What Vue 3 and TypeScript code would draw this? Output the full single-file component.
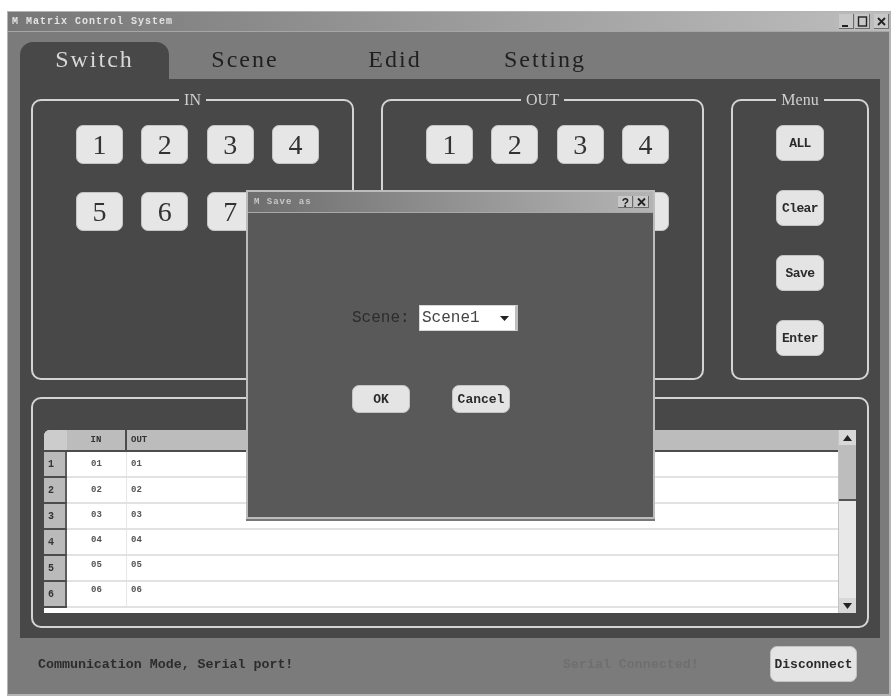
<script setup lang="ts">
import { ref } from 'vue'

const tabs = ['Switch', 'Scene', 'Edid', 'Setting']
const activeTab = ref('Switch')

const ports = [1, 2, 3, 4, 5, 6, 7, 8]
const menuItems = ['ALL', 'Clear', 'Save', 'Enter']

const routes = [
  { in: '01', out: '01' },
  { in: '02', out: '02' },
  { in: '03', out: '03' },
  { in: '04', out: '04' },
  { in: '05', out: '05' },
  { in: '06', out: '06' }
]

const scene = ref('Scene1')
</script>

<template>
  <div class="window">
    <header class="titlebar">
      <span class="title-text">M Matrix Control System</span>
      <div class="win-controls">
        <span class="win-btn"><svg width="15" height="15" viewBox="0 0 15 15"><rect x="3" y="11" width="6" height="2" fill="#222" /></svg></span>
        <span class="win-btn"><svg width="15" height="15" viewBox="0 0 15 15"><rect x="3.5" y="3" width="8" height="9" fill="none" stroke="#222" stroke-width="1.4" /></svg></span>
        <span class="win-btn close"><svg width="15" height="15" viewBox="0 0 15 15"><path d="M4 4 L11 11 M11 4 L4 11" stroke="#222" stroke-width="1.8" /></svg></span>
      </div>
    </header>

    <div class="window-body">
      <nav class="tabs">
        <div
          v-for="tab in tabs"
          :key="tab"
          class="tab"
          :class="{ active: tab === activeTab }"
          @click="activeTab = tab"
        >
          {{ tab }}
        </div>
      </nav>

      <section class="pane">
        <div class="top-groups">
          <fieldset class="group port-group">
            <legend>IN</legend>
            <div class="port-grid">
              <button v-for="p in ports" :key="p" class="port-btn">{{ p }}</button>
            </div>
          </fieldset>

          <fieldset class="group port-group">
            <legend>OUT</legend>
            <div class="port-grid">
              <button v-for="p in ports" :key="p" class="port-btn">{{ p }}</button>
            </div>
          </fieldset>

          <fieldset class="group menu-group">
            <legend>Menu</legend>
            <div class="menu-list">
              <button v-for="m in menuItems" :key="m" class="small-btn menu-btn">{{ m }}</button>
            </div>
          </fieldset>
        </div>

        <div class="table-group">
          <div class="table-frame">
            <div class="table-main">
              <div class="row head">
                <div class="row-no corner"></div>
                <div class="cell col-in">IN</div>
                <div class="cell col-out">OUT</div>
              </div>
              <div v-for="(r, i) in routes" :key="r.in" class="row">
                <div class="row-no">{{ i + 1 }}</div>
                <div class="cell col-in" :style="{ paddingBottom: (i * 2 - 2 > 0 ? i * 2 - 2 : 0) + 'px' }">{{ r.in }}</div>
                <div class="cell col-out" :style="{ paddingBottom: (i * 2 - 2 > 0 ? i * 2 - 2 : 0) + 'px' }">{{ r.out }}</div>
              </div>
            </div>
            <div class="scrollbar">
              <div class="sb-btn"><svg width="9" height="6" viewBox="0 0 9 6"><path d="M4.5 0 L9 6 L0 6 Z" fill="#222" /></svg></div>
              <div class="sb-thumb"></div>
              <div class="sb-track"></div>
              <div class="sb-btn"><svg width="9" height="6" viewBox="0 0 9 6"><path d="M0 0 L9 0 L4.5 6 Z" fill="#222" /></svg></div>
            </div>
          </div>
        </div>
      </section>

      <footer class="statusbar">
        <span class="status-mode">Communication Mode, Serial port!</span>
        <span class="status-conn">Serial Connected!</span>
        <button class="small-btn disconnect">Disconnect</button>
      </footer>
    </div>

    <div class="dialog">
      <header class="dialog-title">
        <span class="dialog-title-text">M Save as</span>
        <div class="dialog-controls">
          <span class="win-btn small"><svg width="15" height="12" viewBox="0 0 15 12"><text x="7.5" y="11" text-anchor="middle" class="help-mark">?</text></svg></span>
          <span class="win-btn small"><svg width="15" height="12" viewBox="0 0 15 12"><path d="M4 2.5 L11 9.5 M11 2.5 L4 9.5" stroke="#222" stroke-width="1.8" /></svg></span>
        </div>
      </header>
      <div class="dialog-body">
        <div class="scene-row">
          <label class="scene-label">Scene:</label>
          <div class="combo">
            <span class="combo-value">{{ scene }}</span>
            <span class="combo-arrow"><svg width="9" height="5" viewBox="0 0 9 5"><path d="M0 0 L9 0 L4.5 5 Z" fill="#222" /></svg></span>
          </div>
        </div>
        <div class="dialog-actions">
          <button class="small-btn dialog-btn">OK</button>
          <button class="small-btn dialog-btn">Cancel</button>
        </div>
      </div>
    </div>
  </div>
</template>

<style>
html,
body {
  background: #ffffff;
  overflow: hidden;
}
</style>

<style scoped>
.window {
  position: relative;
  box-sizing: border-box;
  width: 884px;
  height: 685px;
  margin: 11px 0 0 7px;
  background: #7b7b7b;
  border: 1px solid #b4b4b4;
  border-right-width: 2px;
  border-bottom-width: 2px;
  font-family: 'Liberation Mono', monospace;
  filter: blur(0.55px);
}

/* TITLE BAR */
.titlebar {
  display: flex;
  justify-content: space-between;
  align-items: center;
  height: 19px;
  padding: 0 0 0 4px;
  background: linear-gradient(90deg, #777777, #bdbdbd);
  border-bottom: 1px solid #a6a6a6;
}

.title-text {
  font-size: 10px;
  font-weight: 700;
  letter-spacing: 1px;
  color: #e4e4e4;
}

.win-controls {
  display: flex;
  gap: 1px;
}

.win-btn {
  display: block;
  width: 15px;
  height: 15px;
  background: #c8c8c8;
  box-shadow: inset -1px -1px 0 #6c6c6c;
}

.win-btn.close {
  margin-left: 3px;
}

.win-btn.small {
  height: 12px;
}

.win-btn svg {
  display: block;
}

.help-mark {
  font-family: 'Liberation Sans', sans-serif;
  font-size: 12px;
  font-weight: 700;
  fill: #222;
}

/* MAIN AREA */
.window-body {
  padding: 10px 10px 0 12px;
}

.tabs {
  display: flex;
}

.tab {
  box-sizing: border-box;
  width: 150px;
  height: 37px;
  display: flex;
  align-items: center;
  justify-content: center;
  padding-bottom: 2px;
  border-radius: 13px 13px 0 0;
  font-family: 'Liberation Serif', serif;
  font-size: 24px;
  letter-spacing: 2px;
  color: #1f1f1f;
}

.tab.active {
  width: 149px;
  margin-right: 1px;
  background: #484848;
  color: #d8d8d8;
}

.pane {
  box-sizing: border-box;
  width: 860px;
  height: 559px;
  padding: 12px 11px 0;
  background: #484848;
}

.top-groups {
  display: flex;
  gap: 27px;
}

.group {
  box-sizing: border-box;
  height: 289px;
  min-width: 0;
  margin: 0;
  padding: 16px 0 0;
  border: 2px solid #d4d4d4;
  border-radius: 10px;
}

.group legend {
  margin: 0 auto;
  padding: 0 5px;
  height: 18px;
  line-height: 18px;
  font-family: 'Liberation Serif', serif;
  font-size: 16px;
  color: #cfcfcf;
}

.port-group {
  width: 323px;
}

.menu-group {
  width: 138px;
}

.port-grid {
  display: grid;
  grid-template-columns: repeat(4, 47px);
  column-gap: 18.33px;
  row-gap: 28px;
  padding-left: 43px;
}

.port-btn {
  height: 39px;
  padding: 0;
  border: 1px solid #c4c4c4;
  border-radius: 7px;
  background: #e6e6e6;
  font-family: 'Liberation Serif', serif;
  font-size: 28px;
  color: #333333;
}

.menu-list {
  display: flex;
  flex-direction: column;
  align-items: center;
  gap: 29px;
}

.small-btn {
  padding: 0;
  border: 1px solid #c4c4c4;
  border-radius: 7px;
  background: #e4e4e4;
  font-family: 'Liberation Mono', monospace;
  font-size: 13px;
  font-weight: 700;
  color: #2a2a2a;
}

.menu-btn {
  width: 48px;
  height: 36px;
  letter-spacing: -0.6px;
}

/* TABLE */
.table-group {
  box-sizing: border-box;
  height: 231px;
  margin-top: 17px;
  padding: 31px 11px 0;
  border: 2px solid #d4d4d4;
  border-radius: 10px;
}

.table-frame {
  display: flex;
  width: 812px;
  height: 183px;
  background: #ffffff;
  border-radius: 6px 0 0 0;
  overflow: hidden;
}

.table-main {
  flex: 1;
  min-width: 0;
}

.row {
  display: flex;
  height: 26px;
  border-bottom: 2px solid #e2e2e2;
  box-sizing: border-box;
  font-size: 9px;
  font-weight: 700;
  color: #555555;
}

.row.head {
  height: 22px;
  background: #bcbcbc;
  border-bottom: 2px solid #4c4c4c;
  color: #333333;
}

.row-no {
  box-sizing: border-box;
  flex: none;
  width: 23px;
  display: flex;
  align-items: center;
  padding-left: 4px;
  background: #bababa;
  border-right: 2px solid #5c5c5c;
  box-shadow: 0 2px 0 #4c4c4c;
  font-size: 10px;
  color: #333333;
}

.row-no.corner {
  background: #cccccc;
  border-right: 0;
  box-shadow: none;
}

.cell {
  box-sizing: border-box;
  display: flex;
  align-items: center;
}

.col-in {
  flex: none;
  width: 60px;
  justify-content: center;
  border-right: 1px solid #e6e6e6;
}

.head .col-in {
  border-right: 2px solid #4c4c4c;
}

.col-out {
  flex: 1;
  padding-left: 4px;
}

.scrollbar {
  flex: none;
  width: 18px;
  display: flex;
  flex-direction: column;
  background: #e8e8e8;
  border-left: 1px solid #c4c4c4;
  box-sizing: border-box;
}

.sb-btn {
  flex: none;
  height: 15px;
  display: flex;
  align-items: center;
  justify-content: center;
  background: #d8d8d8;
}

.sb-thumb {
  flex: none;
  height: 56px;
  background: #bdbdbd;
  border-bottom: 2px solid #555555;
  box-sizing: border-box;
}

.sb-track {
  flex: 1;
}

/* STATUS */
.statusbar {
  display: flex;
  align-items: center;
  padding-top: 8px;
}

.status-mode {
  box-sizing: border-box;
  flex: none;
  width: 543px;
  padding-left: 18px;
  font-size: 13.3px;
  font-weight: 700;
  color: #2c2c2c;
}

.status-conn {
  flex: 1;
  font-size: 13.3px;
  font-weight: 700;
  color: #6f6f6f;
}

.disconnect {
  flex: none;
  width: 87px;
  height: 36px;
  margin-right: 22px;
}

/* SAVE DIALOG */
.dialog {
  position: absolute;
  left: 238px;
  top: 178px;
  box-sizing: border-box;
  width: 409px;
  height: 329px;
  display: flex;
  flex-direction: column;
  background: #595959;
  border: 2px solid #bcbcbc;
  box-shadow: 0 2px 0 #777777;
}

.dialog-title {
  flex: none;
  height: 20px;
  display: flex;
  justify-content: space-between;
  align-items: center;
  padding: 0 4px 0 6px;
  background: linear-gradient(90deg, #6e6e6e, #b4b4b4);
  border-bottom: 1px solid #a8a8a8;
}

.dialog-title-text {
  font-size: 9px;
  font-weight: 700;
  letter-spacing: 1px;
  color: #c8c8c8;
}

.dialog-controls {
  display: flex;
  gap: 1px;
}

.dialog-body {
  flex: 1;
  display: flex;
  flex-direction: column;
  align-items: flex-start;
  padding: 92px 0 0 104px;
}

.scene-row {
  display: flex;
  align-items: center;
  gap: 3px;
}

.scene-label {
  width: 64px;
  font-family: 'Liberation Mono', monospace;
  font-size: 16px;
  color: #2c2c2c;
}

.combo {
  box-sizing: border-box;
  width: 99px;
  height: 26px;
  display: flex;
  align-items: center;
  justify-content: space-between;
  padding: 0 6px 0 2px;
  background: #ffffff;
  border: 1px solid #d8d8d8;
  border-right: 3px solid #bdbdbd;
  font-size: 16px;
  color: #444444;
}

.combo-arrow {
  display: flex;
}

.dialog-actions {
  display: flex;
  gap: 42px;
  margin-top: 54px;
}

.dialog-btn {
  width: 58px;
  height: 28px;
}
</style>
